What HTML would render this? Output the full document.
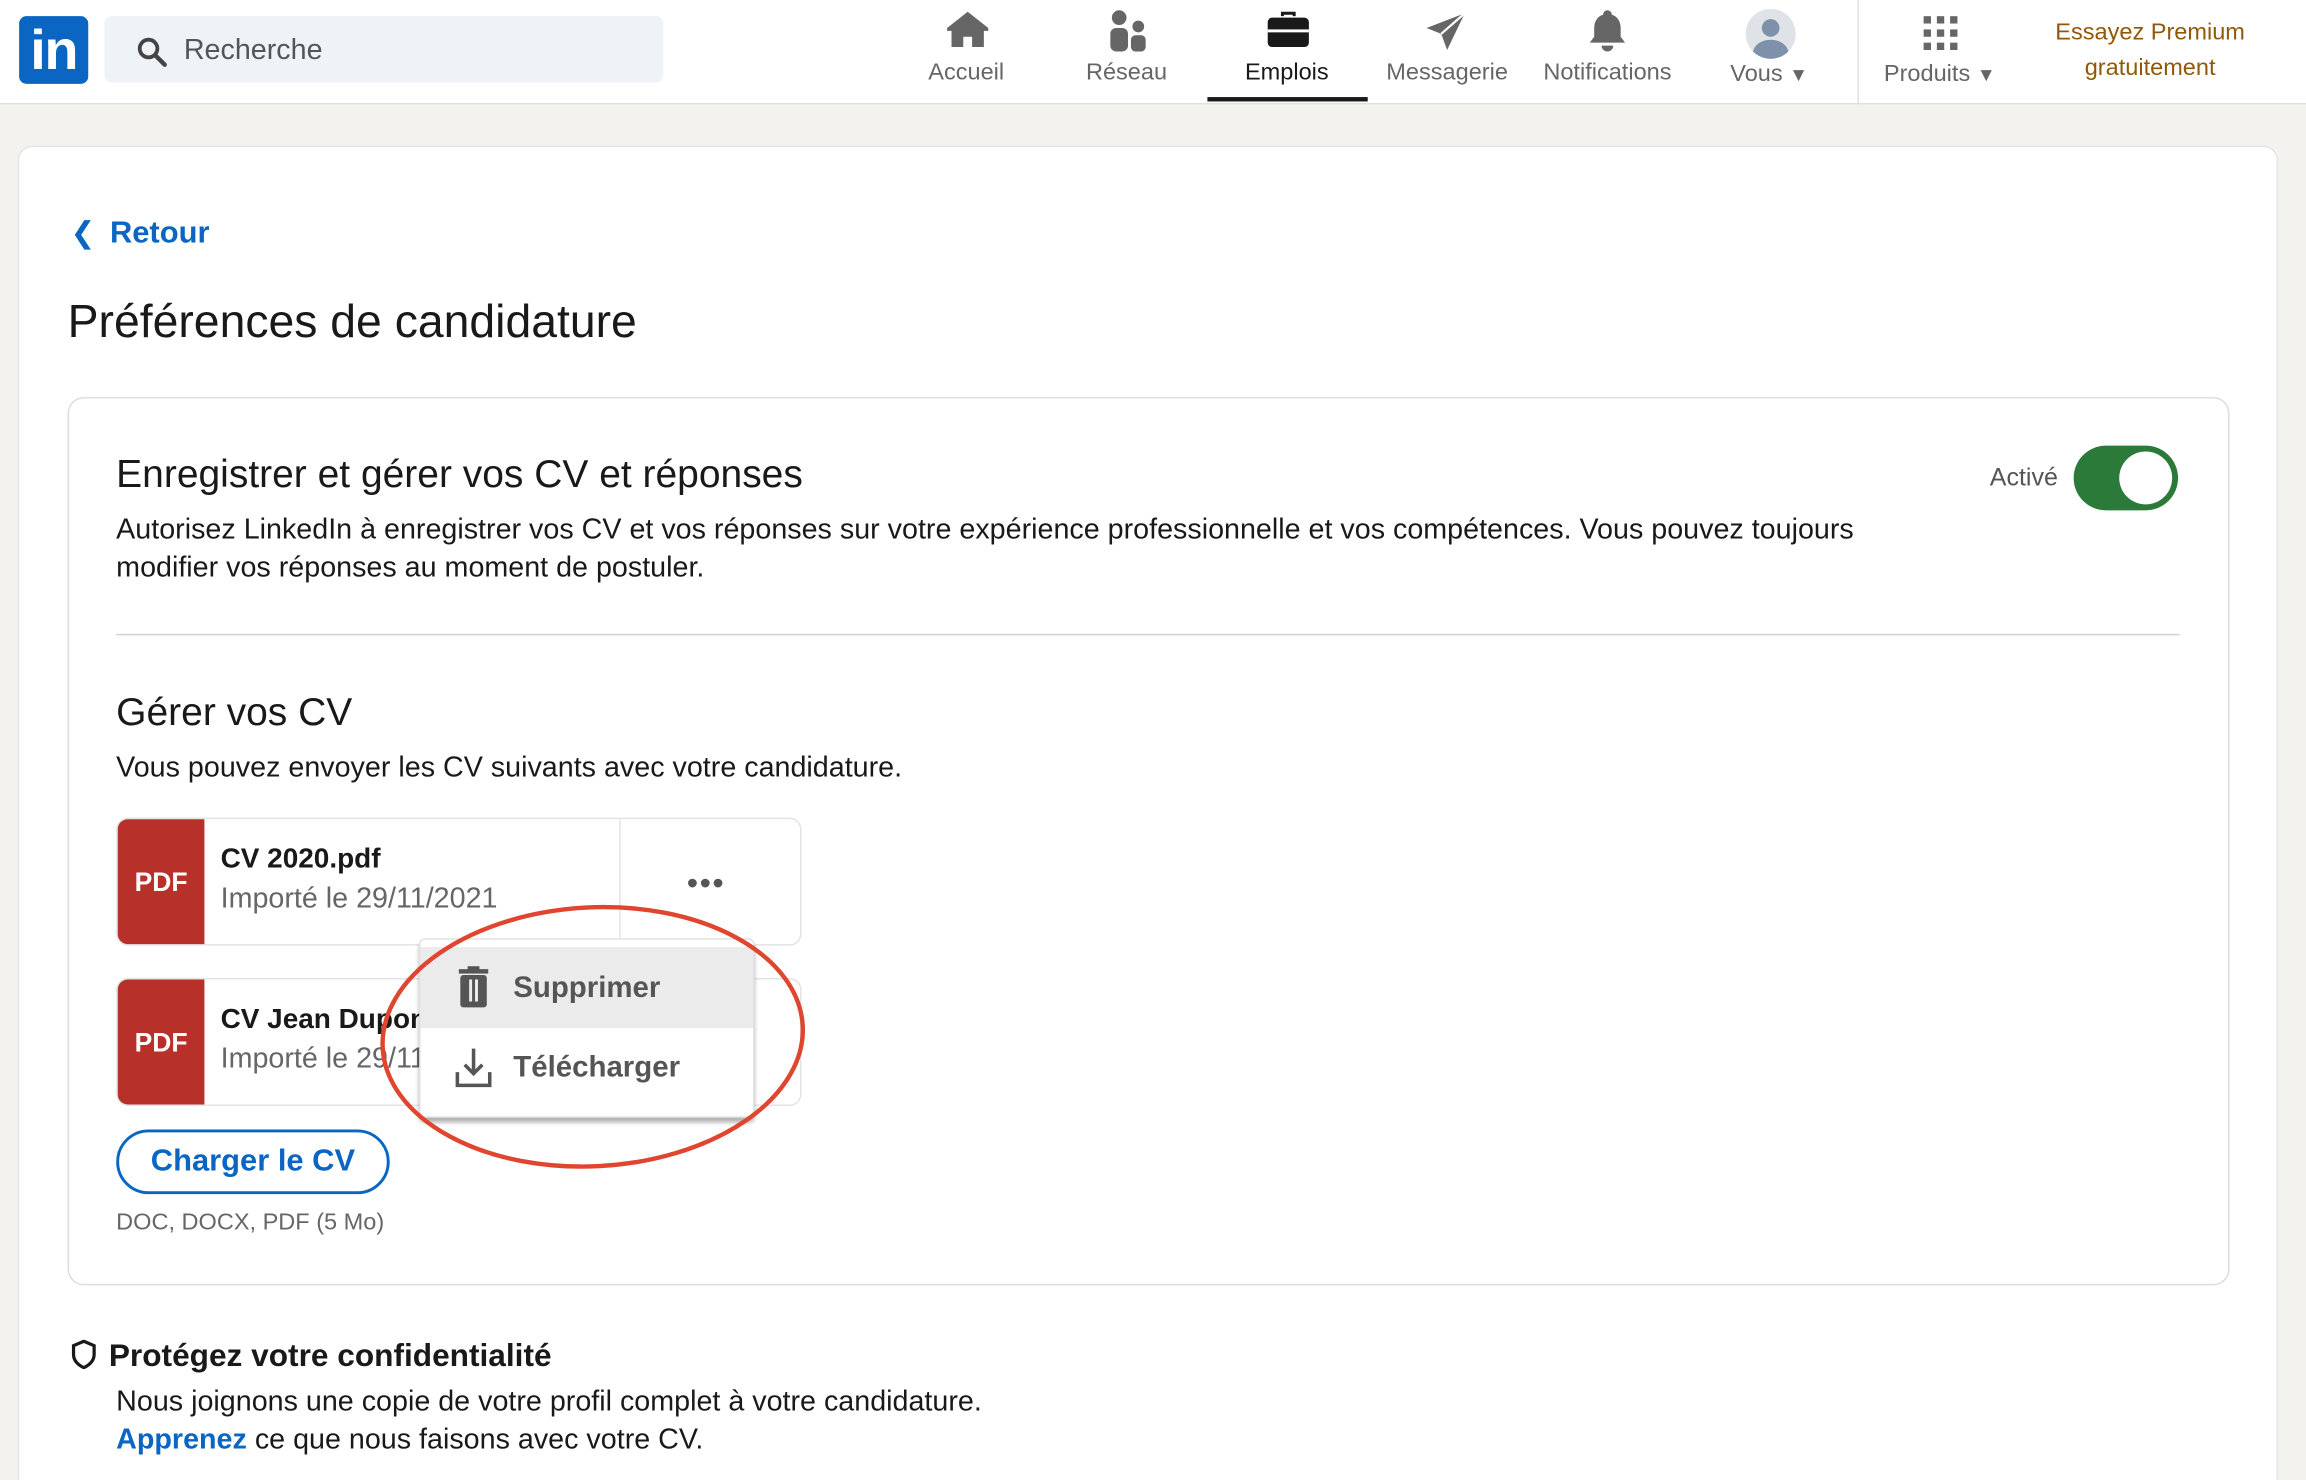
<!DOCTYPE html>
<html><head><meta charset="utf-8"><style>
*{box-sizing:border-box;margin:0;padding:0}
html,body{width:2306px;height:1480px;overflow:hidden;background:#f3f2ef}
#w{width:1568px;height:1006px;transform:scale(1.47066);transform-origin:0 0;position:relative;font-family:"Liberation Sans",sans-serif;color:#191919}
.a{position:absolute;white-space:nowrap}
.hdr{position:absolute;left:0;top:0;width:1568px;height:71px;background:#fff;border-bottom:1px solid #e0dfdc}
.nav{position:absolute;top:40px;width:110px;text-align:center;font-size:16px;color:#666}
.ic{position:absolute;top:6px}
.p{font-size:19.5px}
</style></head><body><div id="w">
<div class="hdr">
 <div class="a" style="left:13px;top:11px;width:47px;height:46px;background:#0a66c2;border-radius:5px;color:#fff;font-weight:bold;font-size:38px;line-height:48px;text-align:center;letter-spacing:-1px">in</div>
 <div class="a" style="left:71px;top:11px;width:380px;height:45px;background:#eef3f8;border-radius:5px"></div>
 <svg class="a" style="left:92px;top:24px" width="22" height="22" viewBox="0 0 22 22"><circle cx="9" cy="9" r="6" fill="none" stroke="#444" stroke-width="2.6"/><path d="M13.5 13.5L20 20" stroke="#444" stroke-width="3" stroke-linecap="round"/></svg>
 <div class="a" style="left:125px;top:23px;font-size:19.5px;color:#555">Recherche</div>
 <svg class="ic" style="left:642px" width="32" height="28" viewBox="0 0 32 28"><path d="M16 2L2 13v2h3v11h8v-7h6v7h8V15h3v-2z" fill="#666"/></svg>
 <div class="nav" style="left:602px;top:41px">Accueil</div>
 <svg class="ic" style="left:752px" width="30" height="30" viewBox="0 0 30 30"><circle cx="9" cy="6" r="5" fill="#666"/><rect x="3" y="13" width="12" height="16" rx="4" fill="#666"/><circle cx="22" cy="12" r="4" fill="#666"/><rect x="17" y="18" width="10" height="11" rx="3" fill="#666"/></svg>
 <div class="nav" style="left:711px;top:41px">Réseau</div>
 <svg class="ic" style="left:860px" width="32" height="28" viewBox="0 0 32 28"><path d="M11 5V2h10v3h-2V4h-6v1z" fill="#191919"/><rect x="2" y="6" width="28" height="20" rx="3" fill="#191919"/><rect x="2" y="14" width="28" height="2" fill="#fff"/></svg>
 <div class="nav" style="left:820px;top:41px;color:#191919">Emplois</div>
 <div class="a" style="left:821px;top:66px;width:109px;height:3px;background:#191919"></div>
 <svg class="ic" style="left:968px" width="30" height="30" viewBox="0 0 30 30"><path d="M28 3L2 13l10 4 4 11z" fill="#666"/><path d="M12 17L28 3" stroke="#fff" stroke-width="1.5"/></svg>
 <div class="nav" style="left:929px;top:41px">Messagerie</div>
 <svg class="ic" style="left:1078px" width="30" height="30" viewBox="0 0 30 30"><path d="M15 1a3 3 0 0 1 3 3c4 1 6 5 6 9v6l3 4H3l3-4v-6c0-4 2-8 6-9a3 3 0 0 1 3-3z" fill="#666"/><path d="M11 25h8a4 4 0 0 1-8 0z" fill="#666"/></svg>
 <div class="nav" style="left:1038px;top:41px">Notifications</div>
 <div class="a" style="left:1187px;top:6px;width:34px;height:34px;border-radius:50%;background:#dfe3e8;overflow:hidden"><div class="a" style="left:11px;top:7px;width:12px;height:12px;border-radius:50%;background:#7d91ab"></div><div class="a" style="left:5px;top:21px;width:24px;height:18px;border-radius:50%;background:#7d91ab"></div></div>
 <div class="nav" style="left:1148px;top:42px">Vous <span style="font-size:13px">▼</span></div>
 <div class="a" style="left:1263px;top:0;width:1px;height:71px;background:#e0dfdc"></div>
 <svg class="ic" style="left:1307px;top:10px" width="26" height="26" viewBox="0 0 26 26" fill="#666"><rect x="1" y="1" width="5" height="5"/><rect x="10" y="1" width="5" height="5"/><rect x="19" y="1" width="5" height="5"/><rect x="1" y="10" width="5" height="5"/><rect x="10" y="10" width="5" height="5"/><rect x="19" y="10" width="5" height="5"/><rect x="1" y="19" width="5" height="5"/><rect x="10" y="19" width="5" height="5"/><rect x="19" y="19" width="5" height="5"/></svg>
 <div class="nav" style="left:1264px;top:42px">Produits <span style="font-size:13px">▼</span></div>
 <div class="a" style="left:1382px;top:11px;width:160px;text-align:center;font-size:16px;line-height:24px;color:#915907;white-space:normal">Essayez Premium gratuitement</div>
</div>
<div class="a" style="left:13px;top:100px;width:1535px;height:930px;background:#fff;border-radius:9px;box-shadow:0 0 0 1px #e6e5e2"></div>
<div class="a" style="left:48px;top:146px;font-size:21px;font-weight:bold;color:#0a66c2"><span style="font-weight:normal;font-size:20px;margin-right:10px">❮</span>Retour</div>
<div class="a" style="left:46px;top:200px;font-size:31.5px;color:#191919">Préférences de candidature</div>
<div class="a" style="left:46px;top:270px;width:1470px;height:604px;border:1px solid #dcdcdc;border-radius:11px"></div>
<div class="a" style="left:79px;top:307px;font-size:26.5px">Enregistrer et gérer vos CV et réponses</div>
<div class="a p" style="left:79px;top:347px;line-height:26px;white-space:normal;width:1210px">Autorisez LinkedIn à enregistrer vos CV et vos réponses sur votre expérience professionnelle et vos compétences. Vous pouvez toujours modifier vos réponses au moment de postuler.</div>
<div class="a" style="left:1353px;top:315px;font-size:17px;color:#555">Activé</div>
<div class="a" style="left:1410px;top:303px;width:71px;height:44px;border-radius:22px;background:#2c7a3a"><div class="a" style="left:31px;top:4px;width:36px;height:36px;border-radius:50%;background:#fff"></div></div>
<div class="a" style="left:79px;top:431px;width:1403px;height:1px;background:#d0d0d0"></div>
<div class="a" style="left:79px;top:469px;font-size:26.5px">Gérer vos CV</div>
<div class="a p" style="left:79px;top:511px">Vous pouvez envoyer les CV suivants avec votre candidature.</div>
<div class="a" style="left:79px;top:556px;width:466px;height:87px;border:1px solid #e3e3e3;border-radius:8px;overflow:hidden"><div class="a" style="left:0;top:0;width:59px;height:87px;background:#b8302a;color:#fff;font-weight:bold;font-size:18px;line-height:86px;text-align:center">PDF</div><div class="a" style="left:341px;top:0;width:1px;height:87px;background:#e3e3e3"></div></div>
<div class="a" style="left:150px;top:574px;font-size:19px;font-weight:bold">CV 2020.pdf</div>
<div class="a" style="left:150px;top:600px;font-size:19.5px;color:#666">Importé le 29/11/2021</div>
<div class="a" style="left:467px;top:588px;font-size:22px;color:#555;letter-spacing:1px">•••</div>
<div class="a" style="left:79px;top:665px;width:466px;height:87px;border:1px solid #e3e3e3;border-radius:8px;overflow:hidden"><div class="a" style="left:0;top:0;width:59px;height:87px;background:#b8302a;color:#fff;font-weight:bold;font-size:18px;line-height:86px;text-align:center">PDF</div></div>
<div class="a" style="left:150px;top:683px;font-size:19px;font-weight:bold">CV Jean Dupont.pdf</div>
<div class="a" style="left:150px;top:709px;font-size:19.5px;color:#666">Importé le 29/11/2021</div>
<div class="a" style="left:285px;top:638px;width:228px;height:122px;background:#fff;border:1px solid #e3e3e3;border-radius:4px;box-shadow:0 3px 3px rgba(0,0,0,.3)"><div class="a" style="left:0;top:5px;width:226px;height:55px;background:#ebebeb"></div></div>
<svg class="a" style="left:311px;top:656px" width="22" height="30" viewBox="0 0 22 30"><rect x="7" y="1" width="8" height="3" fill="#555"/><rect x="1" y="3" width="20" height="3" fill="#555"/><rect x="2" y="7" width="18" height="22" rx="2" fill="#555"/><rect x="8" y="10" width="2" height="15" fill="#ebebeb"/><rect x="12" y="10" width="2" height="15" fill="#ebebeb"/></svg>
<div class="a" style="left:349px;top:661px;font-size:20px;font-weight:bold;color:#555">Supprimer</div>
<svg class="a" style="left:309px;top:712px" width="26" height="28" viewBox="0 0 26 28" fill="none" stroke="#555" stroke-width="2.4"><path d="M13 1v17M7 12l6 6 6-6M2 17v9h22v-9"/></svg>
<div class="a" style="left:349px;top:715px;font-size:20px;font-weight:bold;color:#555">Télécharger</div>
<svg class="a" style="left:255px;top:612px" width="296" height="186" viewBox="0 0 296 186"><ellipse cx="148" cy="93" rx="143" ry="88" fill="none" stroke="#e0452f" stroke-width="3" transform="rotate(-3 148 93)"/></svg>
<div class="a" style="left:79px;top:768px;width:186px;height:44px;border:2px solid #0a66c2;border-radius:22px;color:#0a66c2;font-weight:bold;font-size:21px;line-height:40px;text-align:center">Charger le CV</div>
<div class="a" style="left:79px;top:823px;font-size:16px;color:#666">DOC, DOCX, PDF (5 Mo)</div>
<svg class="a" style="left:48px;top:911px" width="18" height="20" viewBox="0 0 18 20"><path d="M9 1L2 4v6c0 4 3 7 7 9 4-2 7-5 7-9V4z" fill="none" stroke="#191919" stroke-width="2.2"/></svg>
<div class="a" style="left:74px;top:910px;font-size:21.5px;font-weight:bold">Protégez votre confidentialité</div>
<div class="a p" style="left:79px;top:942px">Nous joignons une copie de votre profil complet à votre candidature.</div>
<div class="a p" style="left:79px;top:968px"><b style="color:#0a66c2">Apprenez</b> ce que nous faisons avec votre CV.</div>
</div></body></html>
